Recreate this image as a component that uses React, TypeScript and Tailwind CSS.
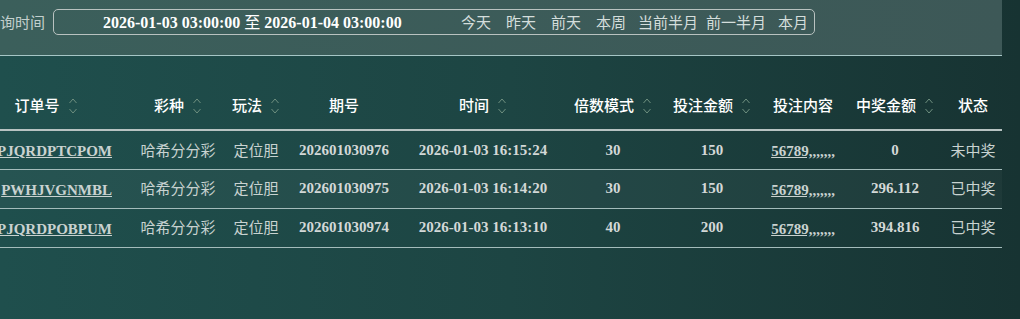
import React from 'react';

const serif = { fontFamily: '"Liberation Serif", "Times New Roman", serif' };

const SortIcon: React.FC = () => (
  <svg width="10" height="20" viewBox="0 0 10 20" className="ml-2 shrink-0">
    <path d="M1.5 7 L5 3 L8.5 7" fill="none" stroke="#6f9080" strokeWidth="1" />
    <path d="M1.5 13 L5 17 L8.5 13" fill="none" stroke="#6f9080" strokeWidth="1" />
  </svg>
);

const columns = [
  { label: '订单号', w: 'w-[164px]', sort: true },
  { label: '彩种', w: 'w-[100px]', sort: true },
  { label: '玩法', w: 'w-[56px]', sort: true },
  { label: '期号', w: 'w-[120px]', sort: false },
  { label: '时间', w: 'w-[158px]', sort: true },
  { label: '倍数模式', w: 'w-[102px]', sort: true },
  { label: '投注金额', w: 'w-[96px]', sort: true },
  { label: '投注内容', w: 'w-[86px]', sort: false },
  { label: '中奖金额', w: 'w-[98px]', sort: true },
  { label: '状态', w: 'w-[58px]', sort: false },
];

const rows = [
  { order: 'PJQRDPTCPOM', issue: '202601030976', time: '2026-01-03 16:15:24', mult: '30', amount: '150', win: '0', status: '未中奖' },
  { order: 'PWHJVGNMBL', issue: '202601030975', time: '2026-01-03 16:14:20', mult: '30', amount: '150', win: '296.112', status: '已中奖' },
  { order: 'PJQRDPOBPUM', issue: '202601030974', time: '2026-01-03 16:13:10', mult: '40', amount: '200', win: '394.816', status: '已中奖' },
];

// label + left margin, matched to the spacing in the filter box
const quick = [
  { t: '今天', ml: 'ml-0' },
  { t: '昨天', ml: 'ml-[15px]' },
  { t: '前天', ml: 'ml-[15px]' },
  { t: '本周', ml: 'ml-[15px]' },
  { t: '当前半月', ml: 'ml-[12px]' },
  { t: '前一半月', ml: 'ml-[8px]' },
  { t: '本月', ml: 'ml-[12px]' },
];

export default function App() {
  return (
    <div
      className="w-[1020px] h-[319px] overflow-hidden bg-gradient-to-r from-[#1f4f4d] via-[#1d4543] to-[#173332]"
      style={{ fontFamily: '"Noto Sans CJK SC", "Noto Sans", sans-serif' }}
    >
      <div className="w-[1002px] overflow-hidden">
        {/* filter bar */}
        <div className="h-[56px] bg-gradient-to-r from-[#3b5f5b] to-[#3d5857] border-b border-[#a6c6c6] flex items-start pt-[9px]">
          <span className="ml-[-15px] h-[26px] leading-[26px] text-[15px] text-[#c3cfcd] whitespace-nowrap">查询时间</span>
          <div className="ml-[8px] w-[762px] h-[26px] border border-[#b9c2c0] rounded-[5px] flex items-center pl-[49px] whitespace-nowrap">
            <div className="w-[358px] text-white text-[16px] font-bold" style={serif}>
              2026-01-03 03:00:00 <span className="font-normal" style={{ fontFamily: '"Noto Sans CJK SC", sans-serif' }}>至</span> 2026-01-04 03:00:00
            </div>
            <div className="flex text-[15px] text-[#d4dedc]">
              {quick.map((q) => (
                <span key={q.t} className={q.ml}>{q.t}</span>
              ))}
            </div>
          </div>
        </div>

        {/* table */}
        <table className="ml-[-36px] mt-[26px] w-[1038px] table-fixed border-collapse">
          <thead>
            <tr className="h-[48px] border-b-2 border-[#b7c3c2]">
              {columns.map((c) => (
                <th key={c.label} className={`${c.w} p-0 font-medium text-[15px] text-white`}>
                  <div className="flex items-center justify-center whitespace-nowrap">
                    <span>{c.label}</span>
                    {c.sort && <SortIcon />}
                  </div>
                </th>
              ))}
            </tr>
          </thead>
          <tbody>
            {rows.map((r, i) => (
              <tr key={r.order} className={`h-[39px] border-b border-[#a4bcbb] ${i === 1 ? 'bg-white/[0.03]' : ''}`}>
                <td className="p-0 pr-[16px] text-right whitespace-nowrap overflow-hidden">
                  <span className="underline text-[15px] font-bold text-[#c9d2d0]" style={serif}>{r.order}</span>
                </td>
                <td className="p-0 text-center text-[15px] text-[#c9d3d1] whitespace-nowrap">哈希分分彩</td>
                <td className="p-0 text-center text-[15px] text-[#c9d3d1] whitespace-nowrap">定位胆</td>
                <td className="p-0 text-center text-[15px] font-bold text-[#d3d8d7]" style={serif}>{r.issue}</td>
                <td className="p-0 text-center text-[15px] font-bold text-[#d3d8d7] whitespace-nowrap" style={serif}>{r.time}</td>
                <td className="p-0 text-center text-[15px] font-bold text-[#d3d8d7]" style={serif}>{r.mult}</td>
                <td className="p-0 text-center text-[15px] font-bold text-[#d3d8d7]" style={serif}>{r.amount}</td>
                <td className="p-0 text-center whitespace-nowrap">
                  <span className="underline text-[15px] font-bold text-[#c9d2d0]" style={serif}>56789,,,,,,,</span>
                </td>
                <td className="p-0 text-center text-[15px] font-bold text-[#d3d8d7]" style={serif}>{r.win}</td>
                <td className="p-0 text-center text-[15px] text-[#c9d3d1] whitespace-nowrap">{r.status}</td>
              </tr>
            ))}
          </tbody>
        </table>
      </div>
    </div>
  );
}
